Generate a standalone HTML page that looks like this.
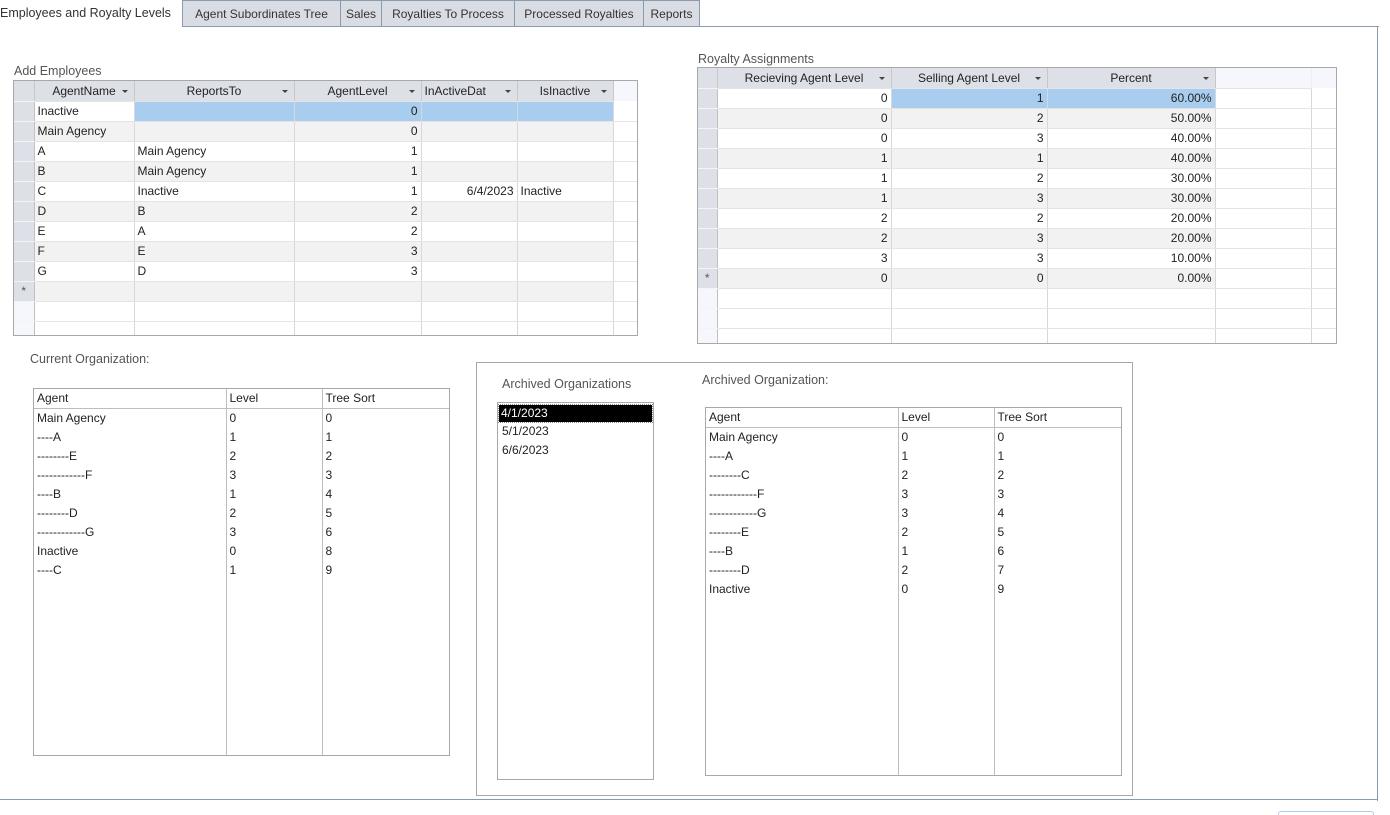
<!DOCTYPE html>
<html><head><meta charset="utf-8"><style>
*{box-sizing:border-box;margin:0;padding:0}
body{width:1390px;height:814px;background:#fff;font-family:"Liberation Sans",sans-serif;font-size:12px;color:#222;position:relative;overflow:hidden}
.a{position:absolute}
.tab{position:absolute;top:0;height:26px;background:#d9dde3;border:1px solid #8a9bb0;border-bottom:none;line-height:26px;text-align:center;color:#333;font-size:12px}
table{border-collapse:collapse;table-layout:fixed}
.g td{height:20px;border-right:1px solid #d8d8d8;border-bottom:1px solid #e4e4e4;padding:0 3px;white-space:nowrap;overflow:hidden}
.g tr.h td{background:#dde1e7;border-right:1px solid #c8c8c8;text-align:center;position:relative}
.g tr.h td.dd::after{content:"";position:absolute;right:6px;top:9px;border:3px solid transparent;border-top:3px solid #444}
.g td.s{background:#dde1e7;border-right:1px solid #c0c0c0;border-bottom:1px solid #f4f4f4}
.g td.e{background:#f6f7fc}
.g tr.alt td{background:#f2f2f2}
.g tr.alt td.s,.g tr td.s{background:#dde1e7}
.g tr.sel td.b{background:#a8cdee}
.g tr.blank td.s{background:#f6f7fc}
.r{text-align:right}
.l td{height:19px;border-right:1px solid #bdbdbd;padding:0 3px;white-space:nowrap}
.l tr.h td{height:19px;border-bottom:1px solid #bdbdbd}
.lb{position:absolute;border:1px solid #a8a8a8;background:#fff}
.lab{position:absolute;color:#555;font-size:12.5px}
</style></head><body>
<div class="a" style="left:0;top:0;width:182px;height:27px;background:#fff;line-height:26px;font-size:12.5px;color:#333;padding-left:0">Employees and Royalty Levels</div>
<div class="tab" style="left:182px;width:159px">Agent Subordinates Tree</div>
<div class="tab" style="left:340px;width:42px">Sales</div>
<div class="tab" style="left:381px;width:134px">Royalties To Process</div>
<div class="tab" style="left:514px;width:130px">Processed Royalties</div>
<div class="tab" style="left:643px;width:57px">Reports</div>
<div class="a" style="left:182px;top:26px;width:1197px;height:1px;background:#8a9bb0"></div>
<div class="a" style="left:1377px;top:26px;width:1px;height:775px;background:#8a9bb0"></div>
<div class="a" style="left:0;top:799px;width:1378px;height:1px;background:#8a9bb0"></div>
<div class="a" style="left:1278px;top:811px;width:96px;height:4px;border:1px solid #a8cdee;border-bottom:none;border-radius:3px 3px 0 0"></div>

<div class="lab" style="left:14px;top:64px">Add Employees</div>
<div class="a" style="left:13px;top:80px;width:625px;height:256px;border:1px solid #a8a8a8;overflow:hidden">
<table class="g" style="width:623px">
<colgroup><col style="width:20px"><col style="width:100px"><col style="width:160px"><col style="width:127px"><col style="width:96px"><col style="width:96px"><col style="width:24px"></colgroup>
<tr class="h"><td class="s"></td><td class="dd">AgentName</td><td class="dd">ReportsTo</td><td class="dd">AgentLevel</td><td class="dd" style="text-align:left">InActiveDat</td><td class="dd">IsInactive</td><td style="background:#f6f7fc;border:none"></td></tr>
<tr class="sel"><td class="s"></td><td style="background:#fff">Inactive</td><td class="b"></td><td class="b r">0</td><td class="b"></td><td class="b"></td><td></td></tr>
<tr class="alt"><td class="s"></td><td>Main Agency</td><td></td><td class="r">0</td><td></td><td></td><td style="background:#fff"></td></tr>
<tr><td class="s"></td><td>A</td><td>Main Agency</td><td class="r">1</td><td></td><td></td><td></td></tr>
<tr class="alt"><td class="s"></td><td>B</td><td>Main Agency</td><td class="r">1</td><td></td><td></td><td style="background:#fff"></td></tr>
<tr><td class="s"></td><td>C</td><td>Inactive</td><td class="r">1</td><td class="r">6/4/2023</td><td>Inactive</td><td></td></tr>
<tr class="alt"><td class="s"></td><td>D</td><td>B</td><td class="r">2</td><td></td><td></td><td style="background:#fff"></td></tr>
<tr><td class="s"></td><td>E</td><td>A</td><td class="r">2</td><td></td><td></td><td></td></tr>
<tr class="alt"><td class="s"></td><td>F</td><td>E</td><td class="r">3</td><td></td><td></td><td style="background:#fff"></td></tr>
<tr><td class="s"></td><td>G</td><td>D</td><td class="r">3</td><td></td><td></td><td></td></tr>
<tr class="alt"><td class="s" style="text-align:center;color:#555">*</td><td></td><td></td><td></td><td></td><td></td><td style="background:#fff"></td></tr>
<tr class="blank"><td class="s"></td><td></td><td></td><td></td><td></td><td></td><td></td></tr>
<tr class="blank"><td class="s"></td><td></td><td></td><td></td><td></td><td></td><td></td></tr>
</table></div>

<div class="lab" style="left:698px;top:52px">Royalty Assignments</div>
<div class="a" style="left:697px;top:67px;width:640px;height:277px;border:1px solid #a8a8a8;overflow:hidden">
<table class="g" style="width:638px">
<colgroup><col style="width:19px"><col style="width:174px"><col style="width:156px"><col style="width:168px"><col style="width:96px"><col style="width:25px"></colgroup>
<tr class="h"><td class="s"></td><td class="dd">Recieving Agent Level</td><td class="dd">Selling Agent Level</td><td class="dd">Percent</td><td style="background:#f6f7fc;border-right:1px solid #eee"></td><td style="background:#f6f7fc;border:none"></td></tr>
<tr class="sel"><td class="s"></td><td class="r" style="background:#fff">0</td><td class="b r">1</td><td class="b r">60.00%</td><td></td><td></td></tr>
<tr class="alt"><td class="s"></td><td class="r">0</td><td class="r">2</td><td class="r">50.00%</td><td style="background:#fff"></td><td style="background:#fff"></td></tr>
<tr><td class="s"></td><td class="r">0</td><td class="r">3</td><td class="r">40.00%</td><td></td><td></td></tr>
<tr class="alt"><td class="s"></td><td class="r">1</td><td class="r">1</td><td class="r">40.00%</td><td style="background:#fff"></td><td style="background:#fff"></td></tr>
<tr><td class="s"></td><td class="r">1</td><td class="r">2</td><td class="r">30.00%</td><td></td><td></td></tr>
<tr class="alt"><td class="s"></td><td class="r">1</td><td class="r">3</td><td class="r">30.00%</td><td style="background:#fff"></td><td style="background:#fff"></td></tr>
<tr><td class="s"></td><td class="r">2</td><td class="r">2</td><td class="r">20.00%</td><td></td><td></td></tr>
<tr class="alt"><td class="s"></td><td class="r">2</td><td class="r">3</td><td class="r">20.00%</td><td style="background:#fff"></td><td style="background:#fff"></td></tr>
<tr><td class="s"></td><td class="r">3</td><td class="r">3</td><td class="r">10.00%</td><td></td><td></td></tr>
<tr class="alt"><td class="s" style="text-align:center;color:#555">*</td><td class="r">0</td><td class="r">0</td><td class="r">0.00%</td><td style="background:#fff"></td><td style="background:#fff"></td></tr>
<tr class="blank"><td class="s"></td><td></td><td></td><td></td><td></td><td></td></tr>
<tr class="blank"><td class="s"></td><td></td><td></td><td></td><td></td><td></td></tr>
<tr class="blank"><td class="s"></td><td></td><td></td><td></td><td></td><td></td></tr>
</table></div>

<div class="lab" style="left:30px;top:352px">Current Organization:</div>
<div class="lb" style="left:33px;top:388px;width:417px;height:368px;overflow:hidden">
<table class="l" style="width:415px;height:366px">
<colgroup><col style="width:192px"><col style="width:96px"><col></colgroup>
<tr class="h"><td>Agent</td><td>Level</td><td style="border-right:none">Tree Sort</td></tr>
<tr><td>Main Agency</td><td>0</td><td style="border-right:none">0</td></tr>
<tr><td>----A</td><td>1</td><td style="border-right:none">1</td></tr>
<tr><td>--------E</td><td>2</td><td style="border-right:none">2</td></tr>
<tr><td>------------F</td><td>3</td><td style="border-right:none">3</td></tr>
<tr><td>----B</td><td>1</td><td style="border-right:none">4</td></tr>
<tr><td>--------D</td><td>2</td><td style="border-right:none">5</td></tr>
<tr><td>------------G</td><td>3</td><td style="border-right:none">6</td></tr>
<tr><td>Inactive</td><td>0</td><td style="border-right:none">8</td></tr>
<tr><td>----C</td><td>1</td><td style="border-right:none">9</td></tr>
<tr><td style="height:auto"></td><td style="height:auto"></td><td style="border-right:none;height:auto"></td></tr>
</table></div>

<div class="a" style="left:476px;top:362px;width:657px;height:434px;border:1px solid #a8a8a8"></div>
<div class="lab" style="left:502px;top:377px">Archived Organizations</div>
<div class="lb" style="left:497px;top:402px;width:157px;height:378px;padding:2px 1px">
<div style="background:#000;color:#fff;height:17px;line-height:17px;padding-left:2px;outline:1px dotted #888">4/1/2023</div>
<div style="height:19px;line-height:19px;padding-left:3px">5/1/2023</div>
<div style="height:19px;line-height:19px;padding-left:3px">6/6/2023</div>
</div>
<div class="lab" style="left:702px;top:373px">Archived Organization:</div>
<div class="lb" style="left:705px;top:407px;width:417px;height:369px;overflow:hidden">
<table class="l" style="width:415px;height:367px">
<colgroup><col style="width:192px"><col style="width:96px"><col></colgroup>
<tr class="h"><td>Agent</td><td>Level</td><td style="border-right:none">Tree Sort</td></tr>
<tr><td>Main Agency</td><td>0</td><td style="border-right:none">0</td></tr>
<tr><td>----A</td><td>1</td><td style="border-right:none">1</td></tr>
<tr><td>--------C</td><td>2</td><td style="border-right:none">2</td></tr>
<tr><td>------------F</td><td>3</td><td style="border-right:none">3</td></tr>
<tr><td>------------G</td><td>3</td><td style="border-right:none">4</td></tr>
<tr><td>--------E</td><td>2</td><td style="border-right:none">5</td></tr>
<tr><td>----B</td><td>1</td><td style="border-right:none">6</td></tr>
<tr><td>--------D</td><td>2</td><td style="border-right:none">7</td></tr>
<tr><td>Inactive</td><td>0</td><td style="border-right:none">9</td></tr>
<tr><td style="height:auto"></td><td style="height:auto"></td><td style="border-right:none;height:auto"></td></tr>
</table></div>
</body></html>
